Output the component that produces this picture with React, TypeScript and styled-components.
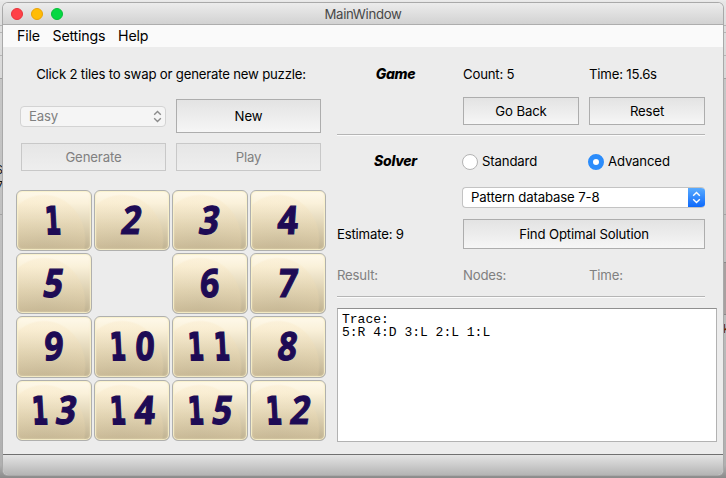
import React from 'react';
import styled, { createGlobalStyle } from 'styled-components';

const GlobalStyle = createGlobalStyle`
  * { box-sizing: border-box; }
  body { margin: 0; overflow: hidden; font-family: Inter, "Liberation Sans", sans-serif; font-size: 13.2px; color: #000; }
`;

const Desktop = styled.div`
  display: grid;
  grid-template-columns: 3px 720px 3px;
  width: 726px;
  height: 478px;
  padding-top: 3px;
  background: linear-gradient(180deg, #ececec 0, #e6e6e6 2px, #dedede 24px, #d8d8d8 78px, #c6c6c6 79px, #bdbdbd 300px, #b0b0b0 465px, #8a8a8a 478px);
`;

const Edge = styled.div<{ $side: 'left' | 'right' }>`
  overflow: hidden;
  height: 475px;
  padding-top: ${p => (p.$side === 'left' ? 159 : 259)}px;
  display: flex;
  flex-direction: column;
  align-items: ${p => (p.$side === 'left' ? 'flex-end' : 'stretch')};
  background:
    linear-gradient(#b5b5b5, #b5b5b5) 0 22px / 100% 1px no-repeat,
    linear-gradient(#b5b5b5, #b5b5b5) 0 29px / 100% 1px no-repeat,
    linear-gradient(#b5b5b5, #b5b5b5) 0 52px / 100% 1px no-repeat,
    linear-gradient(#a0a0a0, #a0a0a0) 0 75px / 100% 1px no-repeat,
    linear-gradient(#a2a2a2, #a2a2a2) 0 211px / 100% 1px no-repeat;
`;

const EdgeText = styled.span<{ $color?: string }>`
  font-size: 12px;
  line-height: 16px;
  color: ${p => p.$color ?? '#111'};
`;

const Backdrop = styled.div`
  height: 53px;
  margin-bottom: 6px;
  border: solid #888;
  border-width: 1px 0;
  background: #a8a0a0;
`;

const Window = styled.div`
  position: relative;
  display: flex;
  flex-direction: column;
  width: 720px;
  height: 472px;
  border-radius: 5px;
  overflow: hidden;
  background: #ececec;
  box-shadow: 0 0 0 1px #a9a9a9;
`;

const TitleBar = styled.div`
  display: grid;
  grid-template-columns: 60px 1fr 60px;
  align-items: center;
  height: 22px;
  flex: none;
  border-bottom: 1px solid #adadad;
  background: linear-gradient(#ececec, #d2d2d2);
`;

const Lights = styled.div`
  display: flex;
  gap: 8px;
  padding-left: 8px;
`;

const Light = styled.span<{ $fill: string; $edge: string }>`
  width: 12px;
  height: 12px;
  border-radius: 50%;
  background: ${p => p.$fill};
  border: 1px solid ${p => p.$edge};
`;

const Title = styled.div`
  text-align: center;
  color: #484848;
  letter-spacing: -0.32px;
`;

const MenuBar = styled.div`
  display: flex;
  align-items: center;
  gap: 12.8px;
  height: 22px;
  flex: none;
  padding: 0 0 1px 14px;
  background: #fafafa;
  font-size: 14.2px;
  letter-spacing: -0.2px;
`;

const MenuItem = styled.span``;

const Content = styled.main`
  display: grid;
  grid-template-columns: 310px 380px;
  column-gap: 11px;
  padding-left: 13px;
  flex: 1;
`;

const StatusBar = styled.div`
  height: 21px;
  flex: none;
  border-top: 1px solid #707070;
  background: linear-gradient(#e4e4e4, #b4b4b4);
`;

const Column = styled.section`
  display: flex;
  flex-direction: column;
`;

const Text = styled.span<{ $dim?: boolean }>`
  white-space: nowrap;
  line-height: 16px;
  color: ${p => (p.$dim ? '#808080' : '#000')};
  letter-spacing: -0.2px;
`;

const Prompt = styled.div`
  display: flex;
  justify-content: center;
  height: 33px;
  margin-top: 19px;
`;

const SetupGrid = styled.div`
  display: grid;
  grid-template-columns: 145px 145px;
  grid-template-rows: 34px 28px;
  gap: 10px;
  align-items: center;
  padding-left: 5px;
`;

const Button = styled.button<{ $height?: number; $wide?: boolean }>`
  width: 100%;
  height: ${p => p.$height ?? 28}px;
  padding: 0;
  border: 1px solid #adadad;
  background: linear-gradient(#e3e3e3, #f6f6f6);
  font: inherit;
  letter-spacing: -0.14px;
  color: #000;
  grid-column: ${p => (p.$wide ? 'span 2' : 'auto')};
  &:disabled { color: #808080; border-color: #c8c8c8; background: linear-gradient(#e6e6e6, #eee); }
`;

const Combo = styled.div<{ $disabled?: boolean; $wide?: boolean }>`
  display: flex;
  justify-content: space-between;
  align-items: stretch;
  grid-column: ${p => (p.$wide ? 'span 2' : 'auto')};
  height: 21px;
  line-height: 18px;
  margin-left: -1px;
  overflow: hidden;
  border: 1px solid ${p => (p.$disabled ? '#d3d3d3' : '#c3c3c3')};
  border-right-width: ${p => (p.$disabled ? 1 : 0)}px;
  border-radius: 4px;
  background: ${p => (p.$disabled ? '#f5f5f5' : '#fff')};
  color: ${p => (p.$disabled ? '#808080' : '#000')};
  padding-left: 8px;
  letter-spacing: -0.14px;
`;

const Stepper = styled.span<{ $active?: boolean }>`
  display: flex;
  align-items: center;
  justify-content: center;
  width: 17px;
  margin: ${p => (p.$active ? '-1px 0' : '0 -1px 0 0')};
  color: ${p => (p.$active ? '#fff' : '#8b8b8b')};
  background: ${p => (p.$active ? 'linear-gradient(#5caeff, #0a66fb)' : 'transparent')};
`;

const Chevrons = ({ active }: { active?: boolean }) => (
  <Stepper $active={active}>
    <svg width="9" height="13" viewBox="0 0 9 13" fill="none" stroke="currentColor" strokeWidth="1.4">
      <path d="M1.2 4.8 4.5 1.6 7.8 4.8M1.2 8.2 4.5 11.4 7.8 8.2" />
    </svg>
  </Stepper>
);

const Board = styled.div`
  display: grid;
  grid-template-columns: repeat(4, 76px);
  grid-template-rows: 61px 61px 62px 61px;
  gap: 2px;
  margin-top: 19px;
`;

const Tile = styled.div`
  display: flex;
  align-items: center;
  justify-content: center;
  overflow: hidden;
  border: 1px solid #b0b0ae;
  border-radius: 6px;
  box-shadow: inset 0 0 0 1px rgba(248, 240, 200, 0.75), inset 0 0 2px 1px rgba(250, 240, 212, 0.6);
  background:
    radial-gradient(ellipse 42px 46px at 28px 50px, rgba(240, 214, 165, 0.1) 0, rgba(246, 222, 176, 0.2) 96%, transparent 100%) border-box no-repeat,
    linear-gradient(#fffaec 0%, #faf1da 22%, #ddd1b2 60%, #beb08f 100%) border-box;
`;

const Digit = styled.span<{ $lean: number; $width: number }>`
  width: 26px;
  text-align: center;
  font: bold 39px/60px "Noto Sans", "Open Sans", sans-serif;
  color: #1e0b55;
  -webkit-text-stroke: 1.2px #1e0b55;
  stroke-linejoin: round;
  transform: translate(0, -2px) skewX(${p => p.$lean}deg) scaleX(${p => p.$width});
`;

const One = styled(Digit)`
  display: flex;
  justify-content: center;
  font: bold 38px/60px "DejaVu Sans Condensed", "DejaVu Sans", sans-serif;
  -webkit-text-stroke-width: 1.8px;
  transform: translate(-1px, 0) skewX(${p => p.$lean}deg) scaleX(${p => p.$width});
`;

const lean: Record<string, number> = { '0': -2, '1': 3, '2': -10, '3': -11, '4': -4, '5': -10, '6': -3, '7': -7, '8': -8, '9': -3 };

const Empty = styled.div``;

const InfoGrid = styled.div<{ $height: number }>`
  display: grid;
  grid-template-columns: repeat(3, 116px);
  column-gap: 10px;
  align-items: center;
  height: ${p => p.$height}px;
`;

const Heading = styled.h2`
  margin: 0;
  padding-left: 1px;
  text-align: center;
  font-size: 14px;
  line-height: 16px;
  font-weight: 800;
  font-style: italic;
  letter-spacing: -0.3px;
`;

const Rule = styled.hr`
  width: 368px;
  height: 2px;
  margin: 0;
  border: 0;
  border-top: 1px solid #b5b5b5;
  background: #fbfbfb;
`;

const Option = styled.label`
  display: flex;
  align-items: flex-start;
  gap: 4px;
  height: 18px;
  margin-left: -1px;
`;

const OptionText = styled(Text)`
  padding-top: 1px;
  letter-spacing: -0.16px;
`;

const Radio = styled.span<{ $on?: boolean }>`
  width: 16px;
  height: 16px;
  margin-top: 2px;
  flex: none;
  border-radius: 50%;
  border: ${p => (p.$on ? '5px solid #2b8cfb' : '1px solid #b3b3b3')};
  background: #fff;
`;

const Spacer = styled.div<{ $h: number }>`
  height: ${p => p.$h}px;
  flex: none;
`;

const Trace = styled.pre`
  margin: 0;
  width: 380px;
  height: 134px;
  padding: 4px 4px;
  border: 1px solid #b2b2b2;
  border-top-color: #8f8f8f;
  background: #fff;
  font: 13px/13px "Courier New", "Liberation Mono", monospace;
`;

const tiles = ['1', '2', '3', '4', '5', '', '6', '7', '9', '10', '11', '8', '13', '14', '15', '12'];

const TileFace = ({ label }: { label: string }) => (
  <Tile>
    {label.split('').map((d, j) => d === '1'
      ? <One key={j} $lean={lean[d]} $width={0.66}>{d}</One>
      : <Digit key={j} $lean={lean[d]} $width={d === '4' ? 0.92 : 0.86}>{d}</Digit>)}
  </Tile>
);

export default function App() {
  return (
    <>
      <GlobalStyle />
      <Desktop>
        <Edge $side="left">
          <EdgeText>S</EdgeText>
          <EdgeText>7</EdgeText>
        </Edge>
        <Window>
          <TitleBar>
            <Lights>
              <Light $fill="#ff4148" $edge="#e6333b" />
              <Light $fill="#ffbc05" $edge="#e8a208" />
              <Light $fill="#05d843" $edge="#07bd38" />
            </Lights>
            <Title>MainWindow</Title>
          </TitleBar>
          <MenuBar>
            <MenuItem>File</MenuItem>
            <MenuItem>Settings</MenuItem>
            <MenuItem>Help</MenuItem>
          </MenuBar>
          <Content>
            <Column>
              <Prompt><Text>Click 2 tiles to swap or generate new puzzle:</Text></Prompt>
              <SetupGrid>
                <Combo $disabled>Easy<Chevrons /></Combo>
                <Button $height={34}>New</Button>
                <Button disabled>Generate</Button>
                <Button disabled>Play</Button>
              </SetupGrid>
              <Board>
                {tiles.map((t, i) => (t ? <TileFace key={i} label={t} /> : <Empty key={i} />))}
              </Board>
            </Column>
            <Column>
              <Spacer $h={19} />
              <InfoGrid $height={16}>
                <Heading>Game</Heading>
                <Text>Count: 5</Text>
                <Text>Time: 15.6s</Text>
              </InfoGrid>
              <Spacer $h={15} />
              <InfoGrid $height={28}>
                <span />
                <Button>Go Back</Button>
                <Button>Reset</Button>
              </InfoGrid>
              <Spacer $h={9} />
              <Rule />
              <Spacer $h={16} />
              <InfoGrid $height={18}>
                <Heading>Solver</Heading>
                <Option><Radio /><OptionText>Standard</OptionText></Option>
                <Option><Radio $on /><OptionText>Advanced</OptionText></Option>
              </InfoGrid>
              <Spacer $h={17} />
              <InfoGrid $height={21}>
                <span />
                <Combo $wide>Pattern database 7-8<Chevrons active /></Combo>
              </InfoGrid>
              <Spacer $h={11} />
              <InfoGrid $height={30}>
                <Text>Estimate: 9</Text>
                <Button $height={30} $wide>Find Optimal Solution</Button>
              </InfoGrid>
              <Spacer $h={17} />
              <InfoGrid $height={18}>
                <Text $dim>Result:</Text>
                <Text $dim>Nodes:</Text>
                <Text $dim>Time:</Text>
              </InfoGrid>
              <Spacer $h={12} />
              <Rule />
              <Spacer $h={10} />
              <Trace>{'Trace:\n5:R 4:D 3:L 2:L 1:L'}</Trace>
            </Column>
          </Content>
          <StatusBar />
        </Window>
        <Edge $side="right">
          <Backdrop />
          <EdgeText $color="#5a2508">k</EdgeText>
        </Edge>
      </Desktop>
    </>
  );
}
